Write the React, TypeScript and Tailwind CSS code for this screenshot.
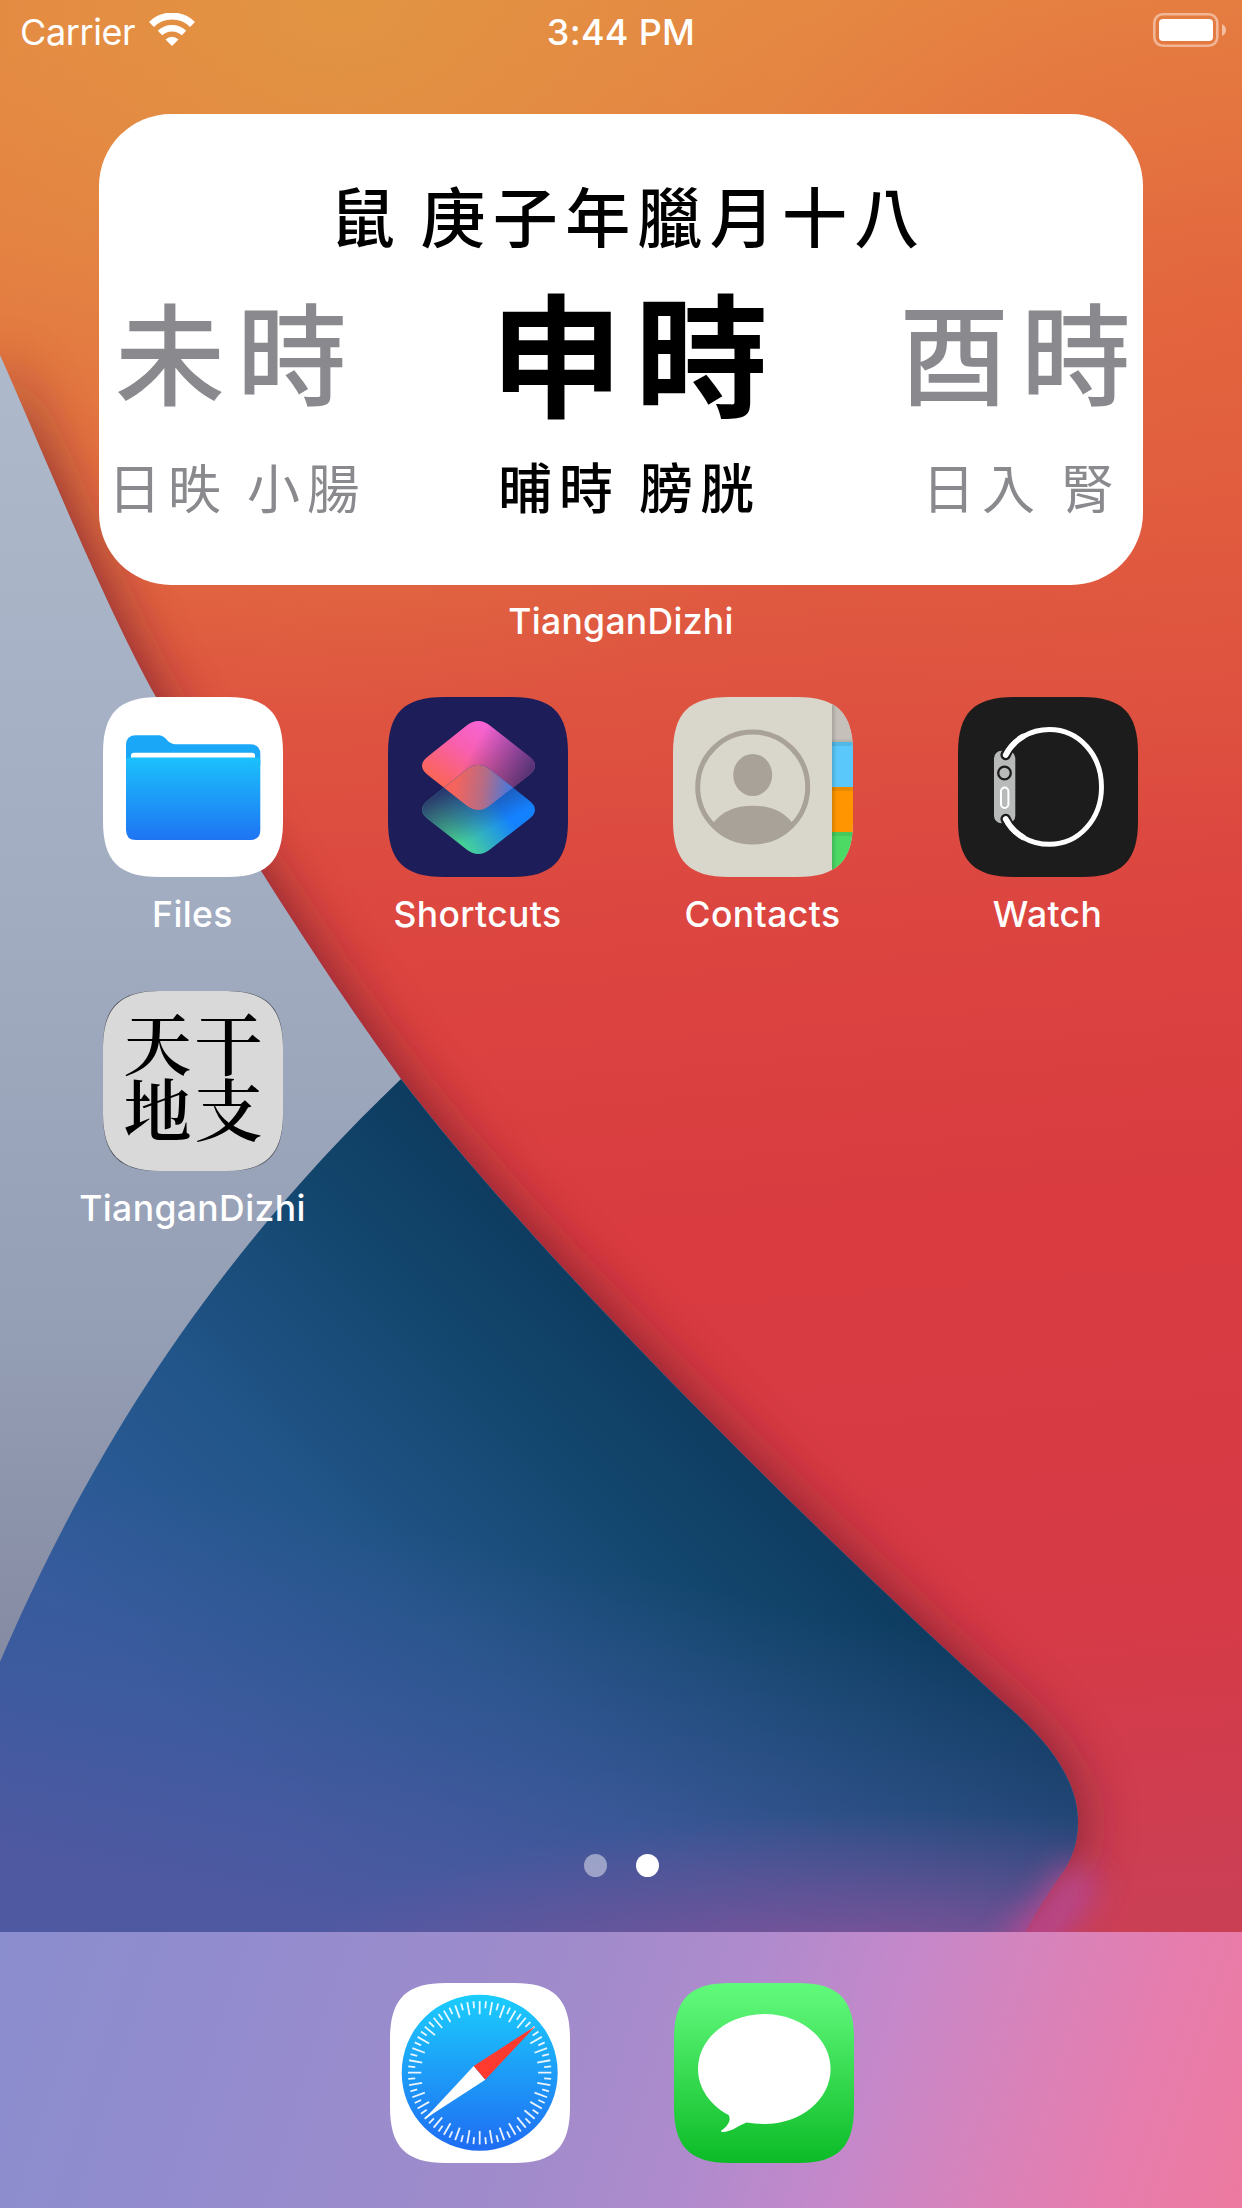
import type { ReactNode } from "react";

const SQUIRCLE =
  "M0,56 C0,16 16,0 56,0 H124 C164,0 180,16 180,56 V124 C180,164 164,180 124,180 H56 C16,180 0,164 0,124 Z";

const UPPER_EDGE = "M0,355 C50,468 104,604 156,697 C238,838 319,966 401,1079";

const LOWER_EDGE =
  "C500,1208 655,1368 789,1500 C870,1579 945,1650 1011,1709 C1055,1748 1078,1785 1078,1822 C1078,1842 1072,1860 1060,1876 C1048,1893 1034,1915 1015,1950";

const SLATE_SHAPE = `${UPPER_EDGE} ${LOWER_EDGE} L0,1950 Z`;

const BLUE_SHAPE = `M401,1079 ${LOWER_EDGE} L0,1950 V1662 C70,1500 180,1290 401,1079 Z`;

function Wallpaper() {
  return (
    <svg className="absolute inset-0 h-full w-full" viewBox="0 0 1242 2208" preserveAspectRatio="none" aria-hidden="true">
      <defs>
        <linearGradient id="red" gradientUnits="userSpaceOnUse" x1="560" y1="0" x2="720" y2="1940">
          <stop offset="0" stopColor="#e68742" />
          <stop offset="0.1" stopColor="#e57c42" />
          <stop offset="0.2" stopColor="#e36a40" />
          <stop offset="0.32" stopColor="#df5840" />
          <stop offset="0.48" stopColor="#dc4540" />
          <stop offset="0.64" stopColor="#d93b40" />
          <stop offset="0.85" stopColor="#d63a46" />
          <stop offset="1" stopColor="#cb3f55" />
        </linearGradient>
        <radialGradient id="sun" gradientUnits="userSpaceOnUse" cx="340" cy="0" r="720">
          <stop offset="0" stopColor="#e09843" stopOpacity="0.8" />
          <stop offset="1" stopColor="#e38a43" stopOpacity="0" />
        </radialGradient>
        <radialGradient id="ember" gradientUnits="userSpaceOnUse" cx="1242" cy="330" r="520">
          <stop offset="0" stopColor="#e25a3a" stopOpacity="0.45" />
          <stop offset="1" stopColor="#e25a3a" stopOpacity="0" />
        </radialGradient>
        <linearGradient id="slate" x1="0" y1="355" x2="0" y2="1660" gradientUnits="userSpaceOnUse">
          <stop offset="0" stopColor="#aeb9cb" />
          <stop offset="0.4" stopColor="#a2adc2" />
          <stop offset="0.75" stopColor="#949eb4" />
          <stop offset="1" stopColor="#858ba2" />
        </linearGradient>
        <linearGradient id="blue" x1="740" y1="1400" x2="290" y2="1840" gradientUnits="userSpaceOnUse">
          <stop offset="0" stopColor="#0d3a5e" />
          <stop offset="0.25" stopColor="#13466d" />
          <stop offset="0.6" stopColor="#225589" />
          <stop offset="1" stopColor="#2f5d9c" />
        </linearGradient>
        <linearGradient id="violet" x1="620" y1="1570" x2="540" y2="1960" gradientUnits="userSpaceOnUse">
          <stop offset="0" stopColor="#4e58a2" stopOpacity="0" />
          <stop offset="0.5" stopColor="#4e58a2" stopOpacity="0.4" />
          <stop offset="1" stopColor="#5059a2" stopOpacity="0.95" />
        </linearGradient>
        <radialGradient id="plum" gradientUnits="userSpaceOnUse" cx="0" cy="0" r="1" gradientTransform="translate(900 1990) scale(620 180)">
          <stop offset="0" stopColor="#9a5098" stopOpacity="0.9" />
          <stop offset="1" stopColor="#8a5098" stopOpacity="0" />
        </radialGradient>
        <filter id="soft" x="-30%" y="-30%" width="160%" height="160%">
          <feGaussianBlur stdDeviation="30" />
        </filter>
        <filter id="glow" x="-100%" y="-100%" width="300%" height="300%">
          <feGaussianBlur stdDeviation="16" />
        </filter>
      </defs>
      <rect width="1242" height="2208" fill="url(#red)" />
      <rect width="1242" height="800" fill="url(#sun)" />
      <rect width="1242" height="900" fill="url(#ember)" />
      <path d={SLATE_SHAPE} fill="#6b1c2c" opacity="0.85" filter="url(#soft)" />
      <path d={SLATE_SHAPE} fill="url(#slate)" />
      <path d={BLUE_SHAPE} fill="url(#blue)" />
      <path d={BLUE_SHAPE} fill="url(#violet)" />
      <path d={BLUE_SHAPE} fill="url(#plum)" />
      <path d="M1084,1872 C1070,1900 1056,1916 1016,1956" fill="none" stroke="#b94a90" strokeWidth="44" opacity="0.95" filter="url(#glow)" />
    </svg>
  );
}

function Icon({ id, children }: { id: string; children: ReactNode }) {
  return (
    <svg className="block size-[180px] shrink-0" viewBox="0 0 180 180" aria-hidden="true">
      <defs>
        <clipPath id={`clip-${id}`}>
          <path d={SQUIRCLE} />
        </clipPath>
      </defs>
      <g clipPath={`url(#clip-${id})`}>{children}</g>
    </svg>
  );
}

function FilesIcon() {
  return (
    <Icon id="files">
      <defs>
        <linearGradient id="folder" x1="0" y1="0" x2="0" y2="1">
          <stop offset="0" stopColor="#1bc1fb" />
          <stop offset="1" stopColor="#1e74f3" />
        </linearGradient>
      </defs>
      <rect width="180" height="180" fill="#fff" />
      <path d="M23,68 V48 Q23,38.3 33,38.3 H56 C63,38.3 64.500,47.3 72,47.3 H147 Q157.300,47.3 157.300,57 V68 Z" fill="#1ba7f8" />
      <path d="M28,62 V58.500 Q28,55.700 31,55.700 H149 Q152,55.700 152,58.500 V62 Z" fill="#fff" />
      <path d="M23,63 Q23,60.500 27,60.500 H153.300 Q157.300,60.500 157.300,63 V133 Q157.300,143 147.300,143 H33 Q23,143 23,133 Z" fill="url(#folder)" />
    </Icon>
  );
}

function ShortcutsIcon() {
  const tile =
    "M102.600,29 L140.500,59 Q153.500,68.700 140.500,78.400 L102.600,108 Q90.300,118 78,108 L40.500,78.400 Q27.500,68.700 40.500,59 L78,29 Q90.300,19 102.600,29 Z";
  return (
    <Icon id="shortcuts">
      <defs>
        <linearGradient id="pink" gradientUnits="userSpaceOnUse" x1="50" y1="90" x2="100" y2="20">
          <stop offset="0" stopColor="#fb6550" />
          <stop offset="0.55" stopColor="#f85fb0" />
          <stop offset="1" stopColor="#f665de" />
        </linearGradient>
        <linearGradient id="fade" gradientUnits="userSpaceOnUse" x1="86" y1="50" x2="144" y2="82">
          <stop offset="0" stopColor="#1d1e59" stopOpacity="0" />
          <stop offset="1" stopColor="#2e285f" stopOpacity="0.85" />
        </linearGradient>
        <linearGradient id="aqua" gradientUnits="userSpaceOnUse" x1="75" y1="105" x2="132" y2="62">
          <stop offset="0" stopColor="#47d396" />
          <stop offset="0.75" stopColor="#1481ff" />
          <stop offset="1" stopColor="#1481ff" />
        </linearGradient>
        <linearGradient id="fade2" gradientUnits="userSpaceOnUse" x1="45" y1="55" x2="72" y2="105">
          <stop offset="0" stopColor="#28316a" stopOpacity="0.95" />
          <stop offset="1" stopColor="#28316a" stopOpacity="0" />
        </linearGradient>
        <linearGradient id="mix" gradientUnits="userSpaceOnUse" x1="68" y1="40" x2="124" y2="48">
          <stop offset="0" stopColor="#f4645c" />
          <stop offset="0.5" stopColor="#b56c86" />
          <stop offset="1" stopColor="#4379e0" />
        </linearGradient>
        <clipPath id="upper">
          <path d={tile} />
        </clipPath>
      </defs>
      <rect width="180" height="180" fill="#1d1e59" />
      <path d={tile} fill="url(#pink)" />
      <path d={tile} fill="url(#fade)" />
      <g transform="translate(0 44)">
        <path d={tile} fill="url(#aqua)" />
        <path d={tile} fill="url(#fade2)" />
      </g>
      <g clipPath="url(#upper)">
        <path d={tile} transform="translate(0 44)" fill="url(#mix)" />
      </g>
    </Icon>
  );
}

function ContactsIcon() {
  return (
    <Icon id="contacts">
      <defs>
        <clipPath id="portrait">
          <circle cx="79.700" cy="90" r="57" />
        </clipPath>
        <linearGradient id="edge" x1="0" x2="0" y1="0" y2="1">
          <stop offset="0" stopColor="#000" stopOpacity="0" />
          <stop offset="1" stopColor="#000" stopOpacity="0.1" />
        </linearGradient>
        <linearGradient id="crease" x1="0" x2="1" y1="0" y2="0">
          <stop offset="0" stopColor="#000" stopOpacity="0.15" />
          <stop offset="1" stopColor="#000" stopOpacity="0" />
        </linearGradient>
      </defs>
      <rect width="180" height="180" fill="#d9d6cc" />
      <rect x="159" width="21" height="45" fill="#c5c1ba" />
      <rect x="159" y="45" width="21" height="45" fill="#5ac8fa" />
      <rect x="159" y="90" width="21" height="45" fill="#ff9500" />
      <rect x="159" y="135" width="21" height="45" fill="#4cd964" />
      {[45, 90, 135].map((y) => (
        <rect key={y} x="159" y={y} width="21" height="4" fill="#000" opacity="0.08" />
      ))}
      <rect x="159" y="41" width="21" height="4" fill="url(#edge)" />
      <rect x="159" width="5" height="180" fill="url(#crease)" />
      <circle cx="79.700" cy="90" r="55" fill="none" stroke="#a9a299" strokeWidth="5" />
      <ellipse cx="79.700" cy="78" rx="19.500" ry="21" fill="#a9a299" />
      <path d="M40,126 C50,114 62,108.700 79.700,108.700 S110,114 119.500,126 L125,150 H34 Z" fill="#a9a299" clipPath="url(#portrait)" />
    </Icon>
  );
}

function WatchIcon() {
  return (
    <Icon id="watch">
      <rect width="180" height="180" fill="#1c1c1c" />
      <rect x="36" y="53.700" width="21.300" height="72.600" rx="7.500" fill="#b8bab9" />
      <path d="M47.700,58 L51,51 M47.700,122 L51,129" stroke="#1c1c1c" strokeWidth="10.500" strokeLinecap="round" />
      <path d="M47.700,58 C55,43 72,32.500 91.500,32.500 C121,32.500 143.500,58 143.500,90 C143.500,122 121,147.300 91.500,147.300 C72,147.300 55,137 47.700,122" fill="none" stroke="#fff" strokeWidth="4.900" strokeLinecap="round" />
      <path d="M47.700,58 C51.350,50.500 57.400,44.100 65,39.600 M47.700,122 C51.350,129.500 57.400,135.800 65,140.300" fill="none" stroke="#fff" strokeWidth="5.800" strokeLinecap="round" />
      <circle cx="46.500" cy="76" r="6.300" fill="#b8bab9" stroke="#1c1c1c" strokeWidth="2.300" />
      <rect x="43" y="90.500" width="7.400" height="20.500" rx="3.700" fill="none" stroke="#fff" strokeWidth="2" />
    </Icon>
  );
}

function TianganIcon() {
  return (
    <div className="relative size-[180px] shrink-0">
      <svg className="block size-[180px]" viewBox="0 0 180 180" aria-hidden="true">
        <path d={SQUIRCLE} fill="#4a4d54" />
        <path d="M0,56 C0.500,17 17,0.500 56,0 H124 C163,0.500 179.500,17 180,56 V124 C179.500,163 163,179.500 124,180 H56 C17,179.500 0.500,163 0,124 Z" fill="#d9d9d9" />
      </svg>
      <div className="absolute inset-0 grid grid-cols-[71px_71px] content-start justify-center pt-[17px] text-center font-['Noto_Serif_CJK_SC','Noto_Sans_CJK_SC',serif] text-[68px] leading-[66px] font-semibold text-black">
        <span>天</span>
        <span>干</span>
        <span>地</span>
        <span>支</span>
      </div>
    </div>
  );
}

function SafariIcon() {
  return (
    <Icon id="safari">
      <defs>
        <linearGradient id="dial" x1="0" y1="0" x2="0" y2="1">
          <stop offset="0" stopColor="#1bcdfd" />
          <stop offset="1" stopColor="#1f6cf2" />
        </linearGradient>
      </defs>
      <rect width="180" height="180" fill="#fff" />
      <circle cx="89.700" cy="89.700" r="78" fill="url(#dial)" />
      {Array.from({ length: 72 }, (_, i) => (
        <line
          key={i}
          x1="89.700"
          x2="89.700"
          y1="18"
          y2={i % 2 ? 25 : 31.3}
          stroke="#fff"
          strokeOpacity="0.9"
          strokeWidth="1.800"
          transform={`rotate(${i * 5} 89.700 89.700)`}
        />
      ))}
      <path d="M34,136.500 L83.700,83 L95.300,96.700 Z" fill="#fff" />
      <path d="M145.500,43 L83.700,83 L95.300,96.700 Z" fill="#ff3b30" />
    </Icon>
  );
}

function MessagesIcon() {
  return (
    <Icon id="messages">
      <defs>
        <linearGradient id="green" x1="0" y1="0" x2="0" y2="1">
          <stop offset="0" stopColor="#60fa7a" />
          <stop offset="0.1" stopColor="#5cf576" />
          <stop offset="1" stopColor="#0bbb26" />
        </linearGradient>
      </defs>
      <rect width="180" height="180" fill="url(#green)" />
      <path d="M90.300,31 C127,31 156.600,55.500 156.600,86 C156.600,116.500 127,141 90.300,141 C84,141 78,140.300 72.500,139.500 C65,142 58,149 48,149 C46.500,149 47,147.500 48,147 C53,143.500 58,137 54.500,132 C36,122 24,105 24,86 C24,55.500 53.600,31 90.300,31 Z" fill="#fff" />
    </Icon>
  );
}

function AppTile({ label, children }: { label: string; children: ReactNode }) {
  return (
    <div className="flex w-[180px] flex-col items-center gap-[16px]">
      {children}
      <span className="-ml-[1px] text-[35.5px] leading-[44px] font-medium tracking-[0.4px] whitespace-nowrap">{label}</span>
    </div>
  );
}

function StatusBar() {
  return (
    <header className="grid h-[114px] grid-cols-3 items-start pt-[10px] text-[36px] leading-[44px]">
      <div className="flex items-start gap-[14px] pl-[20px]">
        <span className="tracking-[-0.4px]">Carrier</span>
        <svg className="mt-[3px] h-[33px] w-[46px]" viewBox="0 0 46 33" fill="none" aria-hidden="true">
          <path d="M2.500,11.500 A29,29 0 0 1 43.500,11.500" stroke="#fff" strokeWidth="7" />
          <path d="M11,20 A17.500,17.500 0 0 1 35,20" stroke="#fff" strokeWidth="6.500" />
          <path d="M23,33 L16.500,26.500 Q23,21 29.500,26.500 Z" fill="#fff" />
        </svg>
      </div>
      <span className="text-center font-medium tracking-[0.3px]">3:44 PM</span>
      <div className="flex justify-end pt-[3px] pr-[16px]">
        <svg className="h-[34px] w-[73px]" viewBox="0 0 73 34" fill="none" aria-hidden="true">
          <rect x="1.300" y="1.300" width="63" height="31.400" rx="8.500" stroke="#fff" strokeOpacity="0.45" strokeWidth="2.600" />
          <rect x="6" y="6" width="54" height="22" rx="4" fill="#fff" />
          <path d="M69,11 Q73,13 73,17 T69,23 Z" fill="#fff" fillOpacity="0.5" />
        </svg>
      </div>
    </header>
  );
}

function Hour({ name, detail }: { name: string; detail: string }) {
  return (
    <div className="flex w-[246px] flex-col items-center gap-[29px] whitespace-nowrap text-[#8a8a8e]">
      <span className="pl-[2px] text-[110px] leading-[160px] font-medium tracking-[12px]">{name}</span>
      <span className="pl-[3px] text-[53px] leading-[56px] tracking-[7px]">{detail}</span>
    </div>
  );
}

function Widget() {
  return (
    <section className="mx-auto flex h-[471px] w-[1044px] flex-col rounded-[72px] bg-white pt-[66px] font-['Noto_Sans_CJK_TC','Noto_Sans_CJK_SC',sans-serif] text-black">
      <h1 className="pl-[15px] text-center text-[65px] leading-[68px] font-medium tracking-[7.3px] [word-spacing:-4px] whitespace-nowrap">鼠 庚子年臘月十八</h1>
      <div className="mt-[21px] flex justify-between pl-[14px]">
        <Hour name="未時" detail="日昳 小腸" />
        <div className="flex w-[246px] flex-col items-center gap-[29px] whitespace-nowrap">
          <span className="pl-[14px] text-[133px] leading-[160px] font-semibold tracking-[12px]">申時</span>
          <span className="pl-[3px] text-[54px] leading-[56px] font-medium tracking-[7px]">晡時 膀胱</span>
        </div>
        <Hour name="酉時" detail="日入 腎" />
      </div>
    </section>
  );
}

export default function App() {
  return (
    <div className="relative h-[2208px] w-[1242px] overflow-hidden font-['Inter',sans-serif] text-white">
      <Wallpaper />
      <div className="relative flex h-full flex-col">
        <StatusBar />
        <Widget />
        <p className="mt-[15px] text-center text-[35.5px] leading-[44px] font-medium tracking-[0.3px]">TianganDizhi</p>
        <main className="mt-[53px] flex flex-1 flex-col gap-[54px] pr-[104px] pl-[103px]">
          <div className="flex justify-between">
            <AppTile label="Files"><FilesIcon /></AppTile>
            <AppTile label="Shortcuts"><ShortcutsIcon /></AppTile>
            <AppTile label="Contacts"><ContactsIcon /></AppTile>
            <AppTile label="Watch"><WatchIcon /></AppTile>
          </div>
          <div className="flex">
            <AppTile label="TianganDizhi"><TianganIcon /></AppTile>
          </div>
        </main>
        <nav className="mb-[55px] flex justify-center gap-[29px]">
          <span className="size-[23px] rounded-full bg-white/45" />
          <span className="size-[23px] rounded-full bg-white" />
        </nav>
        <footer className="flex h-[276px] justify-center gap-[104px] bg-[linear-gradient(108deg,#8a8dce_0%,#938cce_20%,#a08bcb_44%,#b08bcd_58%,#c588ca_69%,#d783bb_79%,#e67dae_89%,#ed7a9f_100%)] pt-[51px] pl-[2px]">
          <SafariIcon />
          <MessagesIcon />
        </footer>
      </div>
    </div>
  );
}
